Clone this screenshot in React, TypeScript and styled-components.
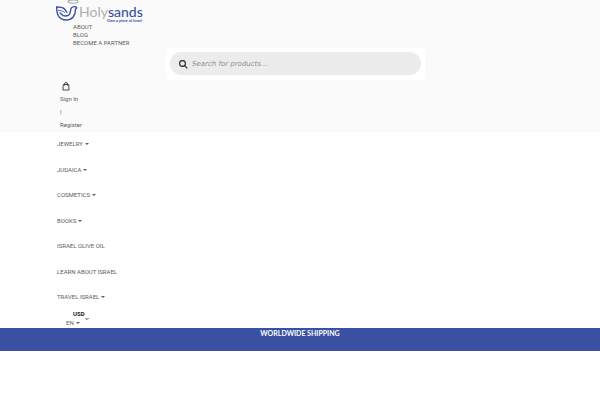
import React from "react";
import styled, { createGlobalStyle } from "styled-components";

const GlobalStyle = createGlobalStyle`
  * { box-sizing: border-box; }
  body { margin: 0; background: #fff; color: #5c5c5c; font: 6px/8px Roboto, sans-serif; }
  ul { margin: 0; padding: 0; list-style: none; }
  a { color: inherit; text-decoration: none; }
`;

const Header = styled.header`
  background: #fafafa;
  padding: 0 56px 3px;
`;

const LogoLink = styled.a`
  display: block;
  width: 88px;
  height: 23px;
  svg { display: block; overflow: visible; }
`;

const TopLinks = styled.ul`
  padding-left: 17px;
`;

const SearchArea = styled.div`
  display: flex;
  justify-content: center;
  padding: 1px 9px 0 0;
`;

const SearchForm = styled.form`
  display: flex;
  width: 100%;
  max-width: 259px;
  padding: 4px 4px 5px;
  background: #fff;
  border-radius: 3px;
`;

const SearchField = styled.label`
  display: flex;
  flex: 1;
  align-items: center;
  gap: 4px;
  height: 23px;
  padding: 0 9px 0 8px;
  border-radius: 12px;
  background: #ececec;
`;

const SearchInput = styled.input`
  flex: 1;
  min-width: 0;
  padding: 0;
  border: 0;
  outline: 0;
  background: transparent;
  font: italic 7px/10px "DejaVu Sans", sans-serif;
  color: #444;
  &::placeholder { color: #8c8c8c; opacity: 1; }
`;

const CartButton = styled.button`
  display: block;
  margin: 2px 0 0 6px;
  padding: 0;
  border: 0;
  background: transparent;
  svg { display: block; }
`;

const Account = styled.div`
  display: flex;
  flex-direction: column;
  align-items: flex-start;
  gap: 5px;
  padding: 4px 0 0 4px;
`;

const Menu = styled.ul`
  display: flex;
  flex-direction: column;
  justify-content: space-between;
  min-height: 161px;
  padding-left: 1px;
`;

const Main = styled.nav`
  padding: 8px 56px 0;
`;

const Caret = styled.span`
  display: inline-block;
  margin-left: 2px;
  vertical-align: 1px;
  border: 2px solid transparent;
  border-top-color: currentColor;
  border-bottom: 0;
`;

const Settings = styled.div`
  display: flex;
  flex-direction: column;
  align-items: flex-start;
  gap: 1px;
  padding: 9px 0 1px 10px;
`;

const Currency = styled.label`
  display: flex;
  align-items: flex-end;
  height: 8px;
  margin-left: 7px;
  svg { margin-bottom: -3px; }
`;

const CurrencySelect = styled.select`
  appearance: none;
  width: 12px;
  height: 8px;
  padding: 0;
  border: 0;
  background: transparent;
  color: #222;
  font: bold 6px/8px Roboto, sans-serif;
`;

const LanguageButton = styled.button`
  padding: 0;
  border: 0;
  background: transparent;
  color: inherit;
  font: inherit;
`;

const Banner = styled.section`
  min-height: 23px;
  background: #3a51a3;
  color: #fff;
  text-align: center;
  font: bold 7px/10px Lato, sans-serif;
`;

const menu = [
  { label: "JEWELRY", more: true },
  { label: "JUDAICA", more: true },
  { label: "COSMETICS", more: true },
  { label: "BOOKS", more: true },
  { label: "ISRAEL OLIVE OIL", more: false },
  { label: "LEARN ABOUT ISRAEL", more: false },
  { label: "TRAVEL ISRAEL", more: true },
];

const Logo = () => (
  <svg width="88" height="23" viewBox="0 0 88 23" role="img" aria-label="Holysands">
    <ellipse cx="17" cy="1.6" rx="5" ry="1.7" fill="none" stroke="#aaa" strokeWidth="1.1" />
    <g fill="none" stroke="#3a51a3" strokeWidth="1.4" strokeLinecap="round" strokeLinejoin="round">
      <path d="M.7 7c2.800 0 5.500.2 7.300 1.600 1.300 1 1.700 2.600 3 3.600" />
      <path d="M.7 7C.5 15.500 3.800 20 10 20c6.400 0 9.600-4.300 9.500-10.800l1.400-1.400c-1-1.400-4.800-1.900-5.900.8-.9 2.300-.2 5.900-3.100 6.900-2.600.9-6-.2-7.800-2.600" />
      <path d="M2.500 10.300c2 .1 4.300.6 6 2.100" strokeWidth=".9" />
    </g>
    <text x="23" y="17" fontFamily="Lato, sans-serif" fontSize="14" fontWeight="400" fill="#aeaeae">
      Holy<tspan fontWeight="500" fill="#3a51a3">sands</tspan>
    </text>
    <text x="51" y="22" fontFamily="Lato, sans-serif" fontSize="4" fontWeight="700" fontStyle="italic" fill="#3a51a3">
      Own a piece of Israel
    </text>
  </svg>
);

export default function App() {
  return (
    <>
      <GlobalStyle />
      <Header>
        <LogoLink href="#"><Logo /></LogoLink>
        <TopLinks>
          <li><a href="#about">ABOUT</a></li>
          <li><a href="#blog">BLOG</a></li>
          <li><a href="#partner">BECOME A PARTNER</a></li>
        </TopLinks>
        <SearchArea>
          <SearchForm role="search">
            <SearchField>
              <svg width="10" height="10" viewBox="0 0 10 10" fill="none" stroke="#222" strokeWidth="1.1" aria-hidden="true">
                <circle cx="4.500" cy="4.500" r="2.900" />
                <path d="M6.600 6.600 9.300 9.300" />
              </svg>
              <SearchInput type="search" aria-label="Search for products" placeholder="Search for products..." />
            </SearchField>
          </SearchForm>
        </SearchArea>
        <CartButton aria-label="Shopping bag">
          <svg width="8" height="9" viewBox="0 0 8 9" fill="none" stroke="#333" strokeWidth=".9">
            <path d="M1.300 2.500h5.400l.4 5.500H.9zM2.500 3.500V1.900a1.500 1.300 0 0 1 3 0v1.600" />
          </svg>
        </CartButton>
        <Account>
          <a href="#signin">Sign In</a>
          <span>|</span>
          <a href="#register">Register</a>
        </Account>
      </Header>
      <Main>
        <Menu>
          {menu.map(({ label, more }) => (
            <li key={label}>
              <a href="#menu">{label}{more && <Caret />}</a>
            </li>
          ))}
        </Menu>
        <Settings>
          <Currency>
            <CurrencySelect aria-label="Currency" defaultValue="USD">
              <option>USD</option>
            </CurrencySelect>
            <svg width="4" height="4" viewBox="0 0 4 4" fill="none" stroke="#333" strokeWidth=".9" aria-hidden="true">
              <path d="m.4 1 1.600 1.600L3.600 1" />
            </svg>
          </Currency>
          <LanguageButton>EN<Caret /></LanguageButton>
        </Settings>
      </Main>
      <Banner>WORLDWIDE SHIPPING</Banner>
    </>
  );
}
